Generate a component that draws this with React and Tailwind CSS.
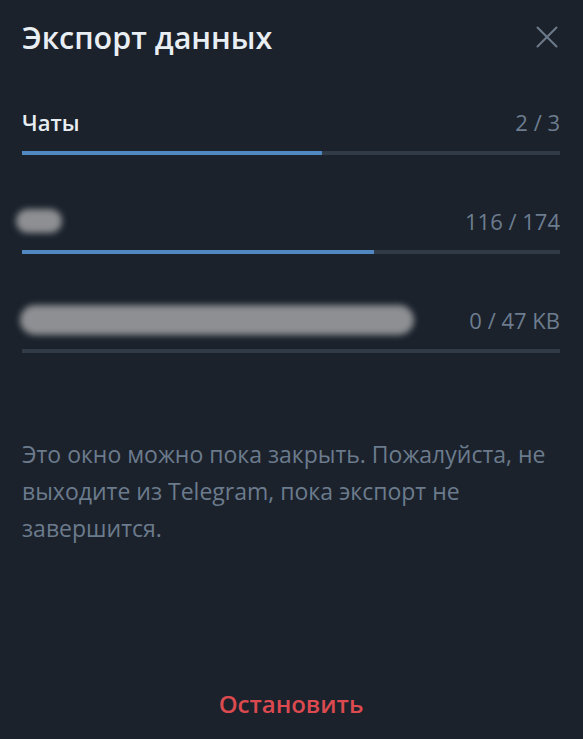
import { X } from 'lucide-react'

const ROWS = [
  { label: 'Чаты', value: '2 / 3', progress: 300 / 538 },
  { blur: 'w-[46px] h-[24px] -ml-[6px]', value: '116 / 174', progress: 352 / 538 },
  { blur: 'w-[394px] h-[30px] -ml-[2px]', value: '0 / 47 KB', progress: 0 },
]

function ProgressRow({ row, first }) {
  return (
    <div className={first ? 'mt-[56px]' : 'mt-[54px]'}>
      <div className="flex items-center justify-between h-[24px]">
        {row.label ? (
          <span className="text-[22px] font-semibold text-[#e8edf2]">{row.label}</span>
        ) : (
          <span className={`block rounded-full bg-[#8d8f92] blur-[3px] ${row.blur}`} />
        )}
        <span className="text-[22px] text-[#6d7d8f]">{row.value}</span>
      </div>
      <div className="mt-[17px] h-[4px] bg-[#313b47]">
        <div className="h-full bg-[#5288c1]" style={{ width: `${row.progress * 100}%` }} />
      </div>
    </div>
  )
}

export default function App() {
  return (
    <div className="w-[583px] h-[739px] bg-[#1b222c] flex flex-col pl-[22px] pr-[23px] pt-[20px] font-['Open_Sans',sans-serif]">
      <div className="flex items-center justify-between h-[34px]">
        <h1 className="text-[30.5px] font-semibold text-[#e9eef3] leading-[34px]">Экспорт данных</h1>
        <X size={38} strokeWidth={1.3} className="text-[#6b7989] -mr-[6px]" />
      </div>

      {ROWS.map((row, i) => (
        <ProgressRow key={i} row={row} first={i === 0} />
      ))}

      <p className="mt-[83px] text-[23px] leading-[37px] text-[#6c7b8c]">
        Это окно можно пока закрыть. Пожалуйста, не выходите из Telegram, пока экспорт не завершится.
      </p>

      <div className="mt-auto mb-[17px] flex justify-center">
        <button className="text-[24px] font-semibold text-[#dc4a50] h-[36px]">Остановить</button>
      </div>
    </div>
  )
}
